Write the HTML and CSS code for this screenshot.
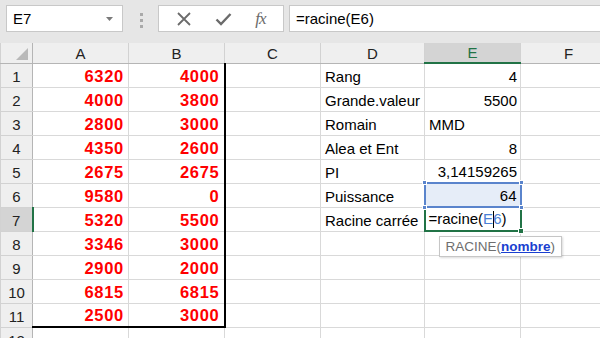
FILE: index.html
```html
<!DOCTYPE html>
<html>
	<head>
		<meta charset="utf-8">
		<title>racine</title>
		<link rel="stylesheet" href="styles.css">
	</head>
	<body>
		<div class="bar">
			<div class="namebox">
				<span>E7</span>
				<svg width="7" height="4" viewBox="0 0 7 4"><path d="M0 0H7L3.5 4Z" fill="#7a7a7a"/></svg>
			</div>
			<div class="dots"><i></i><i></i><i></i></div>
			<div class="btns">
				<svg width="16" height="16" viewBox="0 0 16 16"><path d="M2 2L14 14M14 2L2 14" stroke="#6b6b6b" stroke-width="1.8" fill="none"/></svg>
				<svg width="17" height="16" viewBox="0 0 17 16"><path d="M1.5 8.5L6 13L15.5 3" stroke="#6b6b6b" stroke-width="2.4" fill="none"/></svg>
				<span class="fx">fx</span>
			</div>
			<div class="formula">=racine(E6)</div>
		</div>

		<table class="sheet">
			<colgroup>
				<col class="w-hd"><col class="w-96"><col class="w-96"><col class="w-96"><col class="w-104"><col class="w-96"><col class="w-96">
			</colgroup>
			<tr class="head">
				<th class="corner"><svg width="12" height="12" viewBox="0 0 12 12"><path d="M12 0V12H0Z" fill="#b9b9b9"/></svg></th>
				<th>A</th><th>B</th><th>C</th><th>D</th><th class="cur">E</th><th>F</th>
			</tr>
			<tr><th>1</th><td class="num">6320</td><td class="num edge">4000</td><td></td><td class="txt">Rang</td><td class="val">4</td><td></td></tr>
			<tr><th>2</th><td class="num">4000</td><td class="num edge">3800</td><td></td><td class="txt">Grande.valeur</td><td class="val">5500</td><td></td></tr>
			<tr><th>3</th><td class="num">2800</td><td class="num edge">3000</td><td></td><td class="txt">Romain</td><td class="txt">MMD</td><td></td></tr>
			<tr><th>4</th><td class="num">4350</td><td class="num edge">2600</td><td></td><td class="txt">Alea et Ent</td><td class="val">8</td><td></td></tr>
			<tr><th>5</th><td class="num">2675</td><td class="num edge">2675</td><td></td><td class="txt">PI</td><td class="val">3,14159265</td><td></td></tr>
			<tr><th>6</th><td class="num">9580</td><td class="num edge">0</td><td></td><td class="txt">Puissance</td>
				<td class="val picked">64<span class="hd tl"></span><span class="hd tr"></span><span class="hd bl"></span><span class="hd br"></span></td><td></td></tr>
			<tr><th class="cur">7</th><td class="num">5320</td><td class="num edge">5500</td><td></td><td class="txt">Racine carrée</td>
				<td class="txt active">=racine(<span class="ref">E<b class="caret"></b>6</span>)<span class="fill"></span>
					<div class="tip">RACINE(<a href="javascript:;">nombre</a>)</div>
				</td><td></td></tr>
			<tr><th>8</th><td class="num">3346</td><td class="num edge">3000</td><td></td><td></td><td></td><td></td></tr>
			<tr><th>9</th><td class="num">2900</td><td class="num edge">2000</td><td></td><td></td><td></td><td></td></tr>
			<tr><th>10</th><td class="num">6815</td><td class="num edge">6815</td><td></td><td></td><td></td><td></td></tr>
			<tr class="last"><th>11</th><td class="num">2500</td><td class="num edge">3000</td><td></td><td></td><td></td><td></td></tr>
			<tr><th>12</th><td></td><td></td><td></td><td></td><td></td><td></td></tr>
		</table>
	</body>
</html>
```

FILE: styles.css
```css
*{
	margin: 0;
	padding: 0;
	box-sizing: border-box;
}
body{
	font-family: "Liberation Sans", Arial, sans-serif;
	background: #fff;
	width: 600px;
	height: 338px;
	overflow: hidden;
	color: #000;
}

/* barre de formule */
.bar{
	display: flex;
	align-items: flex-start;
	height: 43px;
	padding: 5px 0 0 6px;
	background: #e6e6e6;
}
.namebox{
	width: 117px;
	height: 27px;
	background: #fff;
	border: 1px solid #c8c8c8;
	display: flex;
	align-items: center;
	justify-content: space-between;
	padding: 0 9px 0 6px;
	font-size: 15px;
}
.dots{
	display: flex;
	flex-direction: column;
	gap: 3px;
	margin: 8px 0 0 17px;
}
.dots i{
	display: block;
	width: 3px;
	height: 3px;
	background: #a9a9a9;
}
.btns{
	width: 126px;
	height: 27px;
	margin-left: 15px;
	background: #fff;
	border: 1px solid #c8c8c8;
	display: flex;
	align-items: center;
	justify-content: space-around;
	padding: 0 6px;
}
.fx{
	font-family: "Liberation Serif", "Times New Roman", serif;
	font-style: italic;
	font-size: 17px;
	color: #6b6b6b;
	letter-spacing: -1px;
}
.formula{
	flex: 1;
	height: 27px;
	margin-left: 5px;
	background: #fff;
	border: 1px solid #c8c8c8;
	border-right: none;
	padding: 4px 0 0 6px;
	font-size: 15px;
}

/* feuille */
.sheet{
	border-collapse: collapse;
	table-layout: fixed;
	width: 616px;
	font-size: 15px;
}
.w-hd{ width: 32px; }
.w-96{ width: 96px; }
.w-104{ width: 104px; }
.sheet tr{
	height: 24px;
}
.sheet .head{
	height: 20px;
}
.sheet td{
	border: 1px solid #d9d9d9;
	padding: 0 4px 2px;
	vertical-align: bottom;
	white-space: nowrap;
	line-height: 17px;
}
.sheet th{
	background: #efefef;
	font-weight: normal;
	color: #222;
	border: 1px solid #d2d2d2;
	border-right-color: #b5b5b5;
	text-align: center;
	vertical-align: bottom;
	padding-bottom: 2px;
	line-height: 17px;
}
.sheet .head th{
	border-top: none;
	border-bottom-color: #b5b5b5;
	border-right-color: #d2d2d2;
	padding-bottom: 1px;
}
.sheet .head th.corner{
	border-right-color: #b5b5b5;
	padding: 0 4px 3px 0;
	text-align: right;
}
.corner svg{
	display: block;
	margin-left: auto;
}
.sheet th.cur{
	background: #d4d4d4;
	color: #217346;
}
.sheet .head th.cur{
	border-bottom: 2px solid #217346;
}
.sheet tr th.cur:first-child{
	color: #222;
	border-right: 2px solid #217346;
}

.num{
	color: #ff0000;
	font-weight: bold;
	text-align: right;
	font-size: 16.5px;
	letter-spacing: 0.7px;
}
.sheet td.num{
	padding-right: 4px;
}
.sheet td.edge{
	border-right: 2px solid #000;
}
.sheet .last td.num{
	border-bottom: 2px solid #000;
}
.val{
	text-align: right;
}
.sheet td.val{
	padding-right: 3px;
}

/* selection E6 */
.sheet td.picked{
	position: relative;
	background: #e6edf8;
	border: 2px solid #5a84cc;
}
.hd{
	position: absolute;
	width: 5px;
	height: 5px;
	background: #5a84cc;
	border: 1px solid #fff;
}
.tl{ left: -4px; top: -4px; }
.tr{ right: -4px; top: -4px; }
.bl{ left: -4px; bottom: -4px; }
.br{ right: -4px; bottom: -4px; }

/* cellule active E7 */
.sheet td.active{
	position: relative;
	border: 2px solid #217346;
	padding-left: 3px;
}
.ref{
	color: #4a7fd6;
}
.caret{
	display: inline-block;
	width: 1px;
	height: 17px;
	background: #000;
	vertical-align: -4px;
	margin: 0 -1px 0 0;
}
.fill{
	position: absolute;
	right: -4px;
	bottom: -4px;
	width: 6px;
	height: 6px;
	background: #217346;
	border: 1px solid #fff;
}
.tip{
	position: absolute;
	left: 13px;
	top: 28px;
	width: 123px;
	height: 21px;
	background: #fff;
	border: 1px solid #c6c6c6;
	box-shadow: 1px 1px 2px rgba(0,0,0,0.15);
	font-size: 13.5px;
	color: #6e6e6e;
	padding: 2px 0 0 6px;
	line-height: 16px;
	z-index: 2;
}
.tip a{
	color: #1a3fd0;
	font-weight: bold;
	text-decoration: underline;
}
```
